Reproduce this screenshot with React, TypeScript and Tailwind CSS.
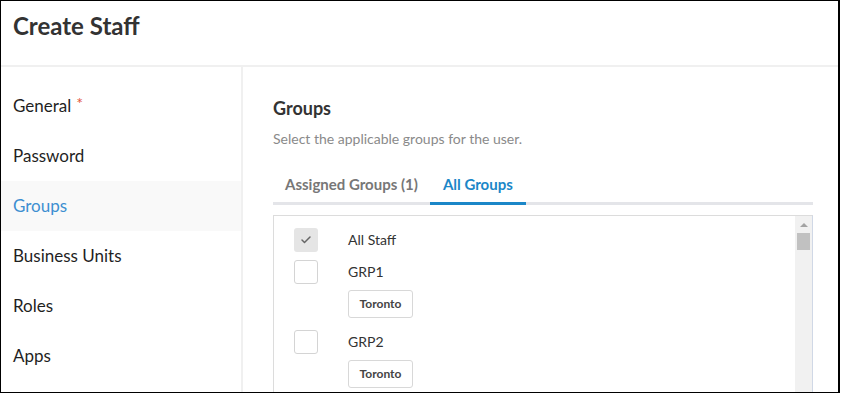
import { Check } from 'lucide-react';

type Group = {
  name: string;
  checked: boolean;
  tags: string[];
};

const navItems = ['General', 'Password', 'Groups', 'Business Units', 'Roles', 'Apps'];

const groups: Group[] = [
  { name: 'All Staff', checked: true, tags: [] },
  { name: 'GRP1', checked: false, tags: ['Toronto'] },
  { name: 'GRP2', checked: false, tags: ['Toronto'] },
];

function Sidebar() {
  return (
    <nav className="w-[242px] shrink-0 border-r-2 border-[#f0f0f0] pt-[14px]">
      {navItems.map((item) => {
        const isActive = item === 'Groups';
        return (
          <div
            key={item}
            className={`flex h-[50px] items-center px-3 text-[17px] ${
              isActive ? 'bg-[#f9f9f9] text-[#3d8fd1]' : 'text-[#1f1f1f]'
            }`}
          >
            {item}
            {item === 'General' && (
              <span className="-mt-1.5 ml-[5px] text-base text-[#e2553a]">*</span>
            )}
          </div>
        );
      })}
    </nav>
  );
}

function GroupRow({ group }: { group: Group }) {
  return (
    <div>
      <div className="flex h-6 items-center gap-[30px]">
        <span
          className={`flex h-6 w-6 shrink-0 items-center justify-center rounded-[3px] ${
            group.checked ? 'bg-[#e5e5e5]' : 'border border-[#d4d4d4] bg-white'
          }`}
        >
          {group.checked && <Check className="h-3 w-3 text-[#666]" strokeWidth={3} />}
        </span>
        <span className="text-sm text-[#333]">{group.name}</span>
      </div>
      {group.tags.length > 0 && (
        <div className="mb-3 ml-[54px] mt-1.5 flex gap-2">
          {group.tags.map((tag) => (
            <span
              key={tag}
              className="flex h-7 w-[65px] items-center justify-center rounded-[3px] border border-[#d8d8d8] text-xs font-bold text-[#444]"
            >
              {tag}
            </span>
          ))}
        </div>
      )}
    </div>
  );
}

function GroupsPanel() {
  return (
    <section className="min-w-0 flex-1 pl-[30px] pr-[25px] pt-[29px]">
      <h2 className="text-lg font-bold leading-6 text-[#333]">Groups</h2>
      <p className="mt-[9px] text-sm leading-5 text-[#8a8a8a]">
        Select the applicable groups for the user.
      </p>

      <div className="mt-[25px] flex border-b-[3px] border-[#e4e5e9]">
        <button
          type="button"
          className="-mb-[3px] border-b-[3px] border-transparent px-3 pb-[8px] text-[15px] font-bold leading-5 text-[#777]"
        >
          Assigned Groups (1)
        </button>
        <button
          type="button"
          className="-mb-[3px] border-b-[3px] border-[#1b87c8] px-[13px] pb-[8px] text-[15px] font-bold leading-5 text-[#1b87c8]"
        >
          All Groups
        </button>
      </div>

      <div className="mt-[10px] flex h-[200px] border border-[#dcdcdc] border-r-[#d0d8e6]">
        <div className="flex-1 space-y-2 pl-5 pt-3">
          {groups.map((group) => (
            <GroupRow key={group.name} group={group} />
          ))}
        </div>
        <div className="flex w-[17px] flex-col items-center bg-[#f1f1f1] pt-[7px]">
          <span className="h-0 w-0 border-x-[4px] border-b-[4px] border-x-transparent border-b-[#a3a3a3]" />
          <span className="mt-[6px] h-[17px] w-[13px] bg-[#c1c1c1]" />
        </div>
      </div>
    </section>
  );
}

export default function App() {
  return (
    <div className="h-[394px] w-[842px] bg-white font-['Lato','Liberation_Sans',sans-serif]">
      <div className="flex h-[393px] w-[840px] flex-col overflow-hidden border border-r-2 border-black">
        <header className="h-[66px] shrink-0 border-b-2 border-[#f0f0f0] px-3 pt-[9px]">
          <h1 className="text-2xl font-bold leading-8 text-[#333]">Create Staff</h1>
        </header>
        <div className="flex min-h-0 flex-1">
          <Sidebar />
          <GroupsPanel />
        </div>
      </div>
    </div>
  );
}
